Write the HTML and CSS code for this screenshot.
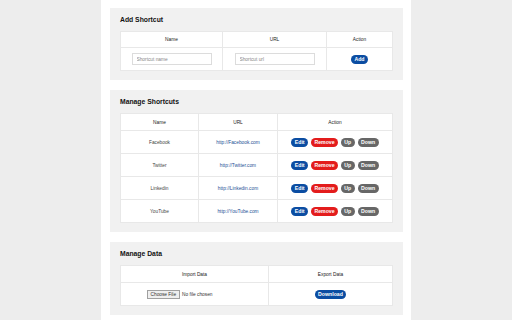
FILE: index.html
```html
<!DOCTYPE html>
<html lang="en">
<head>
    <meta charset="UTF-8">
    <title>Shortcuts Options</title>
    <link rel="stylesheet" href="styles.css">
</head>
<body>
    <div class="container">
        <div class="section">
            <h2>Add Shortcut</h2>
            <table class="addTable">
                <tr class="head">
                    <th>Name</th>
                    <th>URL</th>
                    <th>Action</th>
                </tr>
                <tr>
                    <td><input type="text" placeholder="Shortcut name"></td>
                    <td><input type="text" placeholder="Shortcut url"></td>
                    <td><button class="btn blue">Add</button></td>
                </tr>
            </table>
        </div>

        <div class="section">
            <h2>Manage Shortcuts</h2>
            <table class="manageTable">
                <tr class="head">
                    <th>Name</th>
                    <th>URL</th>
                    <th>Action</th>
                </tr>
                <tr>
                    <td>Facebook</td>
                    <td><a href="#">http://Facebook.com</a></td>
                    <td class="actions"><button class="btn blue">Edit</button><button class="btn red">Remove</button><button class="btn gray">Up</button><button class="btn gray">Down</button></td>
                </tr>
                <tr>
                    <td>Twitter</td>
                    <td><a href="#">http://Twitter.com</a></td>
                    <td class="actions"><button class="btn blue">Edit</button><button class="btn red">Remove</button><button class="btn gray">Up</button><button class="btn gray">Down</button></td>
                </tr>
                <tr>
                    <td>Linkedin</td>
                    <td><a href="#">http://Linkedin.com</a></td>
                    <td class="actions"><button class="btn blue">Edit</button><button class="btn red">Remove</button><button class="btn gray">Up</button><button class="btn gray">Down</button></td>
                </tr>
                <tr>
                    <td>YouTube</td>
                    <td><a href="#">http://YouTube.com</a></td>
                    <td class="actions"><button class="btn blue">Edit</button><button class="btn red">Remove</button><button class="btn gray">Up</button><button class="btn gray">Down</button></td>
                </tr>
            </table>
        </div>

        <div class="section">
            <h2>Manage Data</h2>
            <table class="dataTable">
                <tr class="head">
                    <th>Import Data</th>
                    <th>Export Data</th>
                </tr>
                <tr>
                    <td><input type="file" class="fileInput"></td>
                    <td><button class="btn blue">Download</button></td>
                </tr>
            </table>
        </div>
    </div>
</body>
</html>
```

FILE: styles.css
```css
body {
    margin: 0;
    background-color: #ededed;
    font-family: "Liberation Sans", Arial, sans-serif;
}
.container {
    width: 293px;
    min-height: 320px;
    margin-left: 101px;
    padding: 8px 8px 0 9px;
    background-color: #fff;
}
.section {
    background-color: #f1f1f1;
    padding: 7px 10px 9px 10px;
    margin-bottom: 10px;
}
.section h2 {
    margin: 0 0 6px 0;
    font-size: 6.8px;
    line-height: 10px;
    color: #111;
}
table {
    width: 100%;
    border-collapse: collapse;
    background-color: #fff;
    table-layout: fixed;
}
th, td {
    border: 1px solid #e8e8e8;
    text-align: center;
    font-size: 4.8px;
    color: #444;
    padding: 0;
}
th {
    font-weight: normal;
    color: #222;
}
.head {
    height: 17px;
}
tr {
    height: 23px;
}
.addTable .head {
    height: 16px;
}
.addTable th:nth-child(1) { width: 101px; }
.addTable th:nth-child(2) { width: 103px; }
.manageTable th:nth-child(1) { width: 77px; }
.manageTable th:nth-child(2) { width: 78px; }
.dataTable th:nth-child(1) { width: 147px; }
a {
    color: #234f94;
    text-decoration: none;
}
input[type="text"] {
    width: 80px;
    height: 12px;
    box-sizing: border-box;
    border: 1px solid #dcdcdc;
    padding: 0 4px;
    font-size: 4.8px;
    font-family: "Liberation Sans", Arial, sans-serif;
    outline: none;
}
input::placeholder {
    color: #888;
}
.fileInput {
    width: 96px;
    font-size: 4.8px;
    font-family: "Liberation Sans", Arial, sans-serif;
    color: #333;
}
.fileInput::file-selector-button {
    font-size: 4.8px;
    font-family: "Liberation Sans", Arial, sans-serif;
    height: 9px;
    padding: 0 3px;
    margin-right: 2px;
    border: 1px solid #a0a0a0;
    border-radius: 0;
    background-color: #efefef;
    color: #333;
}
.actions {
    white-space: nowrap;
}
.btn {
    height: 9px;
    padding: 0 3.5px;
    border: none;
    border-radius: 5px;
    font-size: 5.2px;
    font-weight: bold;
    font-family: "Liberation Sans", Arial, sans-serif;
    color: #fff;
    vertical-align: middle;
    margin: 0 1.4px;
}
.blue {
    background-color: #0b4da2;
}
.red {
    background-color: #e31c1c;
}
.gray {
    background-color: #676767;
}
```
